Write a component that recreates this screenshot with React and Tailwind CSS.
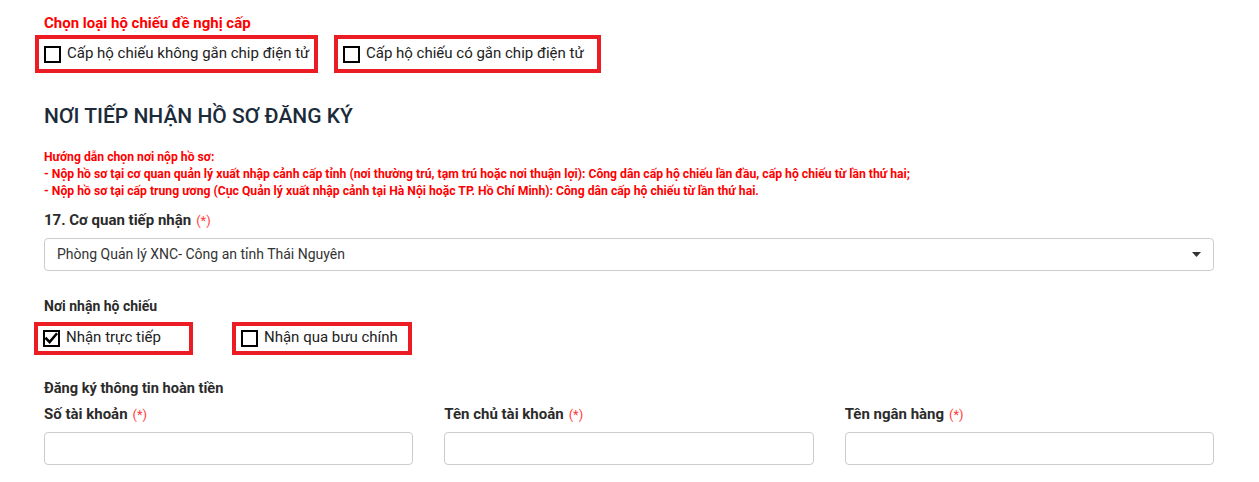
import React from "react";

function Box({ checked }) {
  return (
    <span className="relative inline-block w-[17px] h-[17px] border-2 border-black bg-white shrink-0">
      {checked && (
        <svg viewBox="0 0 16 16" className="absolute left-[-1px] top-[-1px] w-[15px] h-[15px]">
          <path d="M2.5 8.2 L6 11.8 L13 3.5" fill="none" stroke="#000" strokeWidth="2.8" strokeLinecap="square" />
        </svg>
      )}
    </span>
  );
}

function RedCheck({ label, checked, w, h }) {
  return (
    <div
      className="flex items-center gap-[6px] border-4 border-[#ec1c24] pl-[5px] pr-[4px]"
      style={{ width: w, height: h }}
    >
      <Box checked={checked} />
      <span className="text-[15px] text-[#222] leading-none pb-[2px]">{label}</span>
    </div>
  );
}

function Req() {
  return <span className="font-normal text-[#ff3b3b] text-[13px] ml-[5px]">(*)</span>;
}

export default function App() {
  return (
    <div
      className="w-[1259px] h-[482px] bg-white overflow-hidden"
      style={{ fontFamily: "Roboto, 'Noto Sans', sans-serif" }}
    >
      <div className="pl-[35px] w-[1214px]">
        <div className="pl-[9px] pt-[13px] h-[35px] text-[15px] font-bold text-[#ff0000] leading-[20px]">
          Chọn loại hộ chiếu đề nghị cấp
        </div>
        <div className="flex gap-[16px]">
          <RedCheck label="Cấp hộ chiếu không gắn chip điện tử" w={283} h={38} />
          <RedCheck label="Cấp hộ chiếu có gắn chip điện tử" w={267} h={38} />
        </div>
      </div>

      <div className="pl-[44px] w-[1214px]">
        <div className="mt-[30px] text-[21px] font-medium text-[#1c2b39] leading-[26px]">
          NƠI TIẾP NHẬN HỒ SƠ ĐĂNG KÝ
        </div>
        <div className="mt-[20px] text-[12.2px] font-bold text-[#ff0000] leading-[17px]">
          <div>Hướng dẫn chọn nơi nộp hồ sơ:</div>
          <div>
            - Nộp hồ sơ tại cơ quan quản lý xuất nhập cảnh cấp tỉnh (nơi thường trú, tạm trú hoặc nơi thuận lợi): Công dân cấp hộ chiếu lần đầu, cấp hộ chiếu từ lần thứ hai;
          </div>
          <div>
            - Nộp hồ sơ tại cấp trung ương (Cục Quản lý xuất nhập cảnh tại Hà Nội hoặc TP. Hồ Chí Minh): Công dân cấp hộ chiếu từ lần thứ hai.
          </div>
        </div>
        <div className="mt-[10px] text-[15px] font-bold text-[#2b2b2b] leading-[20px]">
          17. Cơ quan tiếp nhận
          <Req />
        </div>
        <div className="mt-[7px] h-[33px] border border-[#ccc] rounded-[4px] flex items-center justify-between pl-[12px] pr-[12px]">
          <span className="text-[14px] text-[#333]">Phòng Quản lý XNC- Công an tỉnh Thái Nguyên</span>
          <svg width="9" height="5" viewBox="0 0 9 5">
            <path d="M0 0 L9 0 L4.5 5 Z" fill="#333" />
          </svg>
        </div>
        <div className="mt-[25px] text-[14px] font-bold text-[#2b2b2b] leading-[20px]">Nơi nhận hộ chiếu</div>
      </div>

      <div className="pl-[34px] mt-[6px] flex gap-[39px]">
        <RedCheck label="Nhận trực tiếp" checked w={159} h={33} />
        <RedCheck label="Nhận qua bưu chính" w={180} h={33} />
      </div>

      <div className="pl-[44px] w-[1214px]">
        <div className="mt-[23px] text-[14.6px] font-bold text-[#2b2b2b] leading-[20px]">
          Đăng ký thông tin hoàn tiền
        </div>
        <div className="grid grid-cols-3 gap-[31px] mt-[6px]">
          {["Số tài khoản", "Tên chủ tài khoản", "Tên ngân hàng"].map((l) => (
            <div key={l}>
              <div className="text-[15px] font-bold text-[#2b2b2b] leading-[20px]">
                {l}
                <Req />
              </div>
              <div className="mt-[7px] h-[33px] border border-[#ccc] rounded-[4px]" />
            </div>
          ))}
        </div>
      </div>
    </div>
  );
}
